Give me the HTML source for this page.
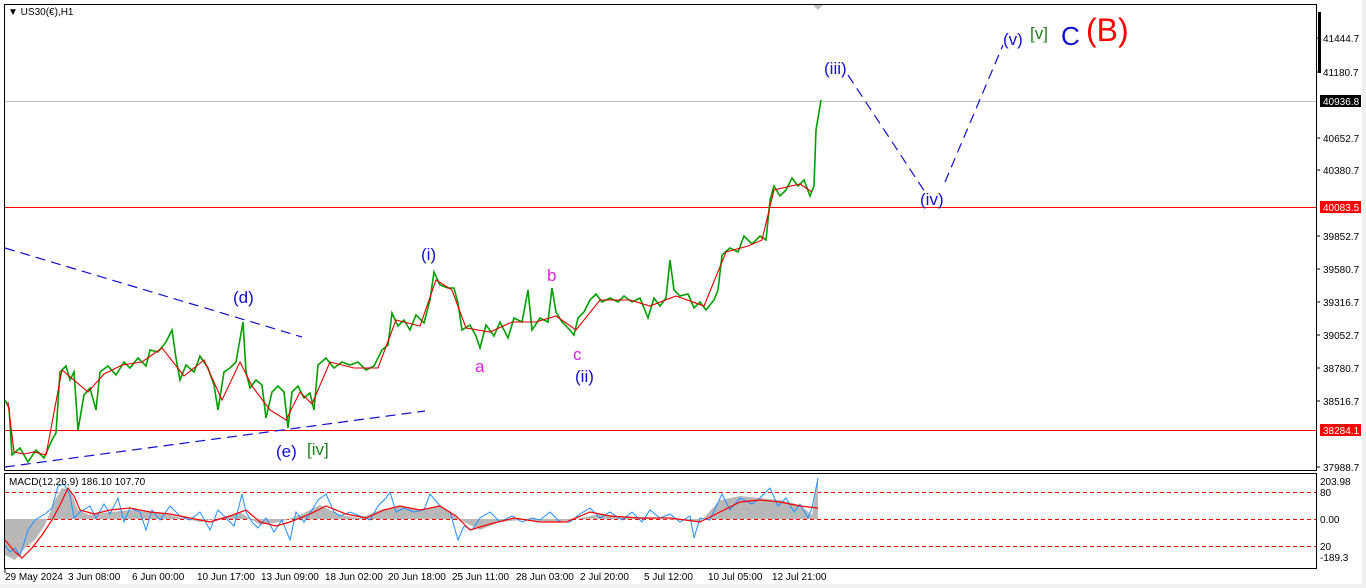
<!DOCTYPE html>
<html><head><meta charset="utf-8"><style>
html,body{margin:0;padding:0;background:#fff;}
body{width:1366px;height:588px;overflow:hidden;position:relative;font-family:"Liberation Sans",sans-serif;}
svg{position:absolute;left:0;top:0;}
</style></head><body>
<svg width="1366" height="588" xmlns="http://www.w3.org/2000/svg" font-family="Liberation Sans, sans-serif">
<rect x="0" y="0" width="1366" height="588" fill="#fff"/>
<rect x="0" y="584" width="1366" height="4" fill="#f0f0f0"/>
<rect x="1362" y="0" width="4" height="588" fill="#f0f0f0"/>
<!-- frames -->
<rect x="4.5" y="4.5" width="1312" height="466" fill="none" stroke="#000"/>
<rect x="4.5" y="473.5" width="1312" height="95" fill="none" stroke="#000"/>
<!-- horizontal lines -->
<line x1="5" y1="101.5" x2="1316" y2="101.5" stroke="#c0c0c0"/>
<line x1="5" y1="207.5" x2="1316" y2="207.5" stroke="#f00"/>
<line x1="5" y1="430.5" x2="1316" y2="430.5" stroke="#f00"/>
<!-- title -->
<text x="8" y="15" font-size="10" fill="#000">▼ US30(€),H1</text>
<polygon points="813,5 823,5 818,10" fill="#c0c0c0"/>
<!-- wave lines -->
<g stroke="#1010d0" stroke-width="1.2" stroke-dasharray="10,6" fill="none">
<line x1="5" y1="248" x2="302" y2="337"/>
<line x1="5" y1="467" x2="425" y2="411"/>
<line x1="848" y1="75" x2="925" y2="192"/>
<line x1="945" y1="182" x2="1003" y2="45"/>
</g>
<!-- price path -->
<polyline fill="none" stroke="#00a000" stroke-width="1.6" points="5,400 9,408 12,455 20,448 28,462 36,450 44,458 52,440 56,433 60,372 66,366 70,380 74,372 78,430 84,395 90,388 96,410 100,372 108,366 116,375 124,362 130,368 138,358 146,366 150,350 158,352 166,342 172,330 176,358 180,380 186,365 194,372 200,356 208,368 214,385 218,410 224,372 230,368 236,362 243,322 246,372 250,388 256,380 262,385 266,418 272,392 278,386 284,392 288,428 292,392 298,386 304,398 310,393 314,410 318,365 326,358 334,368 342,362 350,365 358,362 366,370 374,366 382,350 388,345 392,313 398,326 404,320 410,330 416,315 424,323 430,300 434,272 440,285 448,288 454,288 458,303 462,330 470,325 476,336 480,348 486,325 494,336 500,322 508,338 514,318 522,322 528,290 532,330 540,318 548,322 552,288 556,312 562,322 568,328 574,335 578,318 584,312 590,300 596,294 602,302 610,298 618,302 624,296 632,302 640,298 648,318 654,298 660,306 666,298 670,260 674,290 680,296 688,294 694,308 700,302 706,310 714,300 718,290 722,255 730,248 738,252 744,236 752,244 760,236 766,240 770,200 774,186 780,196 786,190 792,178 798,186 804,180 810,196 814,186 816,130 819,112 821,100"/>
<polyline fill="none" stroke="#e00000" stroke-width="1.1" points="8,402 14,452 24,454 34,452 46,455 62,370 88,392 104,374 122,365 142,362 162,348 184,376 204,360 222,400 240,362 252,386 270,410 286,420 300,392 312,404 330,362 354,368 378,368 396,320 420,326 436,280 452,290 466,328 490,332 512,322 536,322 556,316 576,330 600,300 630,300 650,306 676,296 704,306 726,252 748,246 762,240 774,190 800,184 812,192"/>
<!-- labels -->
<g font-size="17" fill="#1010d0">
<text x="233" y="303">(d)</text>
<text x="276" y="457">(e)</text>
<text x="421" y="260">(i)</text>
<text x="575" y="382">(ii)</text>
<text x="824" y="74">(iii)</text>
<text x="920" y="205">(iv)</text>
<text x="1003" y="45">(v)</text>
</g>
<text x="307" y="455" font-size="17" fill="#208020">[iv]</text>
<text x="1030" y="39" font-size="17" fill="#208020">[v]</text>
<text x="1061" y="45" font-size="26" fill="#1010d0">C</text>
<text x="1086" y="41" font-size="32" fill="#f00">(B)</text>
<g font-size="17" fill="#e020e0">
<text x="475" y="372">a</text>
<text x="547" y="281">b</text>
<text x="573" y="360">c</text>
</g>
<!-- price axis -->
<g font-size="10" fill="#000">
<text x="1323" y="42">41444.7</text>
<text x="1323" y="76">41180.7</text>
<text x="1323" y="142">40652.7</text>
<text x="1323" y="174">40380.7</text>
<text x="1323" y="240">39852.7</text>
<text x="1323" y="273">39580.7</text>
<text x="1323" y="306">39316.7</text>
<text x="1323" y="339">39052.7</text>
<text x="1323" y="372">38780.7</text>
<text x="1323" y="405">38516.7</text>
<text x="1323" y="471">37988.7</text>
<text x="1320" y="485">203.98</text>
<text x="1320" y="496">80</text>
<text x="1320" y="523">0.00</text>
<text x="1320" y="550">20</text>
<text x="1320" y="561">-189.3</text>
</g>
<g stroke="#000"><line x1="1317" y1="38" x2="1320" y2="38"/><line x1="1317" y1="72" x2="1320" y2="72"/><line x1="1317" y1="138" x2="1320" y2="138"/><line x1="1317" y1="170" x2="1320" y2="170"/><line x1="1317" y1="236" x2="1320" y2="236"/><line x1="1317" y1="269" x2="1320" y2="269"/><line x1="1317" y1="302" x2="1320" y2="302"/><line x1="1317" y1="335" x2="1320" y2="335"/><line x1="1317" y1="368" x2="1320" y2="368"/><line x1="1317" y1="401" x2="1320" y2="401"/><line x1="1317" y1="467" x2="1320" y2="467"/></g>
<rect x="1318" y="12" width="3" height="61" fill="#000"/>
<rect x="1320" y="95" width="41" height="12" fill="#000"/>
<text x="1323" y="105" font-size="10" fill="#fff">40936.8</text>
<rect x="1320" y="201" width="41" height="12" fill="#f00"/>
<text x="1323" y="211" font-size="10" fill="#fff">40083.5</text>
<rect x="1320" y="424" width="41" height="12" fill="#f00"/>
<text x="1323" y="434" font-size="10" fill="#fff">38284.1</text>
<!-- MACD -->
<g stroke="#f00" stroke-dasharray="4,3"><line x1="5" y1="492.5" x2="1316" y2="492.5"/><line x1="5" y1="519.5" x2="1316" y2="519.5"/><line x1="5" y1="546.5" x2="1316" y2="546.5"/></g>
<polygon fill="#b8b8b8" points="5,519 5,555 15,560 25,548 35,540 45,525 55,500 62,488 70,490 78,510 90,515 110,512 130,510 150,512 170,515 200,522 220,518 240,512 260,525 280,522 300,515 320,505 340,515 360,518 380,510 400,506 420,510 440,505 460,520 480,530 500,522 520,520 560,522 600,514 640,518 680,520 700,522 720,500 740,496 760,498 780,500 800,505 812,515 818,478 818,519"/>
<polyline fill="none" stroke="#1e90ff" stroke-width="1" points="5,545 10,552 15,548 20,556 28,530 35,520 45,514 52,508 58,486 64,484 70,495 74,518 80,512 90,506 96,518 104,504 110,514 118,498 124,522 130,508 140,512 146,530 152,510 160,520 170,506 180,516 190,520 200,512 210,530 218,510 228,520 234,526 242,494 246,512 252,522 258,528 266,518 274,532 282,520 290,540 296,512 304,522 312,510 318,500 326,494 334,512 340,516 350,512 360,516 370,520 378,506 386,498 390,492 396,512 404,508 414,512 424,510 430,494 440,506 450,512 458,540 464,526 472,530 480,518 490,512 500,522 512,516 522,522 532,518 540,520 550,512 560,522 570,522 580,514 590,508 600,518 610,512 622,520 632,512 642,522 650,510 660,518 670,514 680,522 690,516 694,538 700,518 710,520 722,494 730,510 740,498 752,504 760,498 770,488 778,506 786,498 794,512 800,504 808,518 812,508 818,478"/>
<polyline fill="none" stroke="#f00" stroke-width="1.2" points="5,540 15,552 22,558 32,548 42,535 52,520 60,505 68,488 74,496 80,510 94,514 110,510 130,508 150,512 170,514 190,518 210,522 230,516 246,510 260,522 276,526 290,522 310,514 326,506 346,514 366,518 384,510 400,506 420,510 440,506 456,516 470,530 490,524 514,518 540,522 566,522 590,512 610,516 640,518 670,518 700,522 720,512 740,502 760,500 780,502 800,506 818,508"/>
<text x="9" y="485" font-size="10" fill="#000">MACD(12,26,9) 186.10 107.70</text>
<!-- time axis -->
<g stroke="#000"><line x1="5" y1="569" x2="5" y2="573"/></g>
<g font-size="10" fill="#000">
<text x="5" y="580">29 May 2024</text>
<text x="68" y="580">3 Jun 08:00</text>
<text x="132" y="580">6 Jun 00:00</text>
<text x="197" y="580">10 Jun 17:00</text>
<text x="261" y="580">13 Jun 09:00</text>
<text x="325" y="580">18 Jun 02:00</text>
<text x="388" y="580">20 Jun 18:00</text>
<text x="452" y="580">25 Jun 11:00</text>
<text x="516" y="580">28 Jun 03:00</text>
<text x="580" y="580">2 Jul 20:00</text>
<text x="644" y="580">5 Jul 12:00</text>
<text x="708" y="580">10 Jul 05:00</text>
<text x="772" y="580">12 Jul 21:00</text>
</g>
</svg>
</body></html>
